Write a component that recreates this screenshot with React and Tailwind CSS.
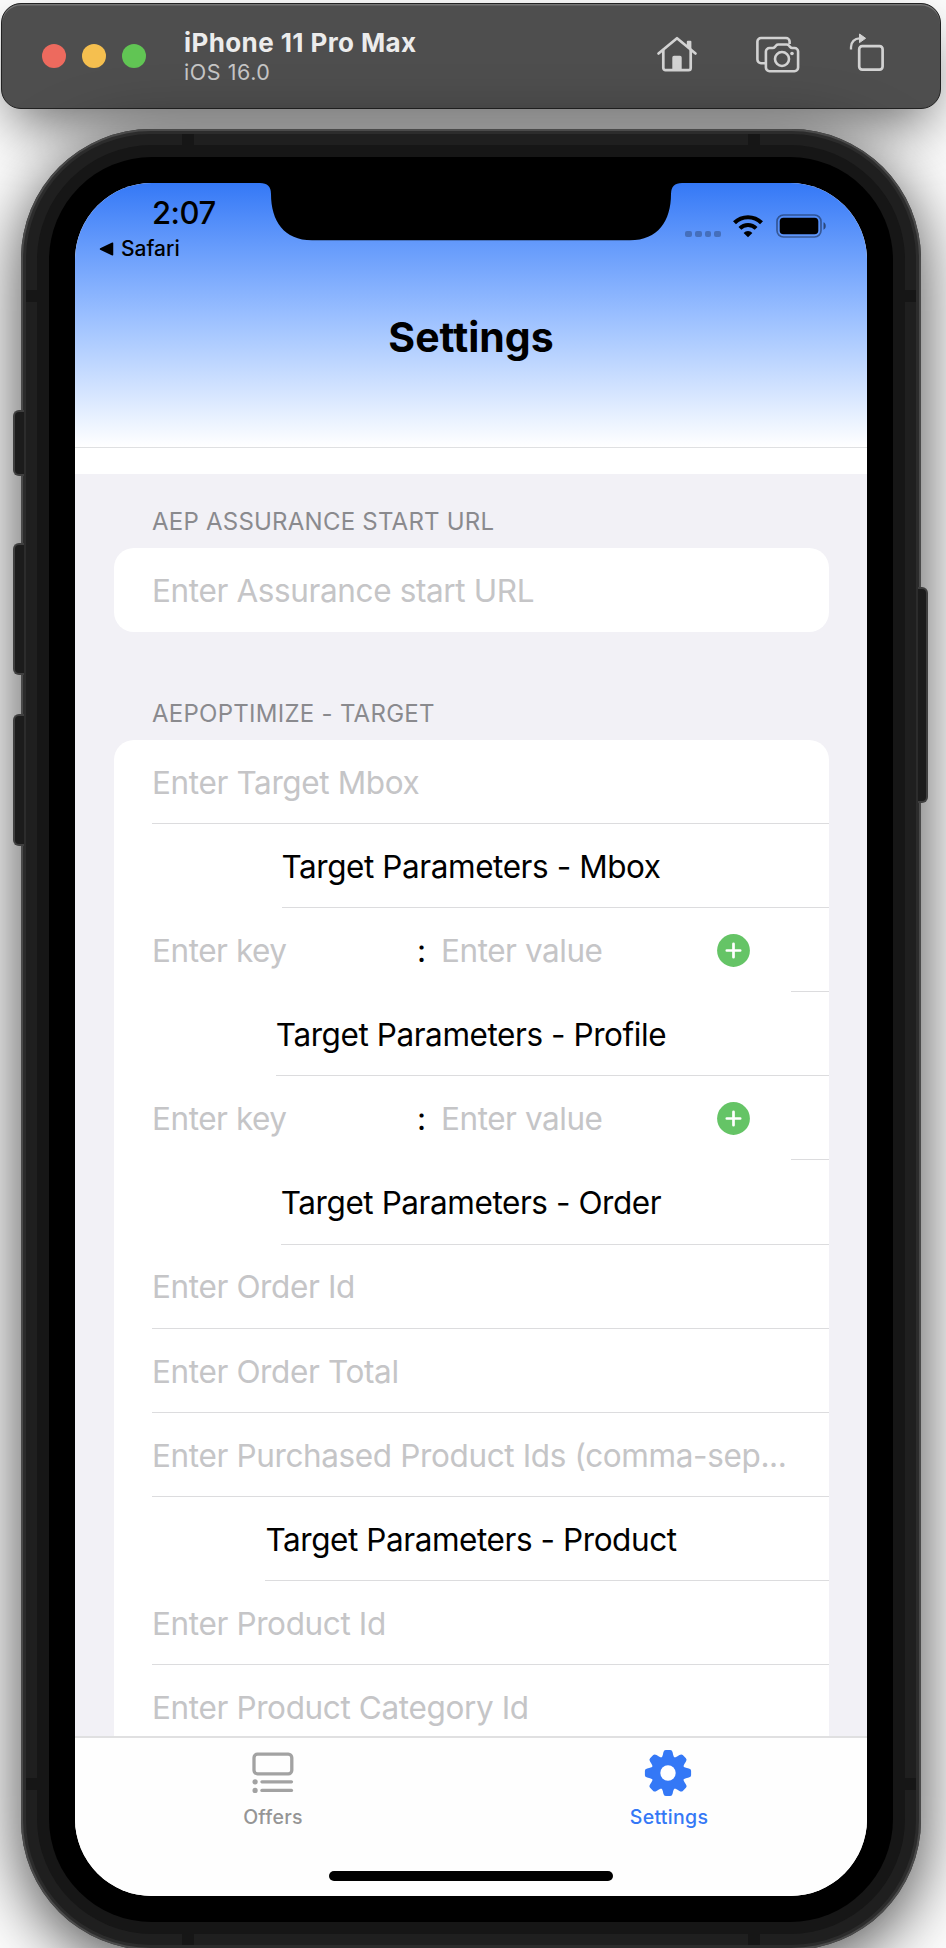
const fields = [
  { kind: 'field', text: 'Enter Target Mbox' },
  { kind: 'title', text: 'Target Parameters - Mbox', inset: 'ml-[168px]' },
  { kind: 'pair' },
  { kind: 'title', text: 'Target Parameters - Profile', inset: 'ml-[162px]' },
  { kind: 'pair' },
  { kind: 'title', text: 'Target Parameters - Order', inset: 'ml-[167px]' },
  { kind: 'field', text: 'Enter Order Id' },
  { kind: 'field', text: 'Enter Order Total' },
  { kind: 'field', text: 'Enter Purchased Product Ids (comma-sep...' },
  { kind: 'title', text: 'Target Parameters - Product', inset: 'ml-[151px]' },
  { kind: 'field', text: 'Enter Product Id' },
  { kind: 'field', text: 'Enter Product Category Id' },
];

function HomeIcon() {
  return (
    <svg className="h-[38px] w-[42px]" viewBox="0 0 42 38" fill="none" stroke="#d2d2d2" strokeWidth="2.7" strokeLinecap="round" strokeLinejoin="round">
      <path d="M2.5 18.5 21 3.200 39.500 18.500" />
      <path d="M7.300 15v18a2.200 2.200 0 0 0 2.200 2.200h23a2.200 2.200 0 0 0 2.200-2.200V15" />
      <path d="M31.800 11.500V6.700h2.600v7.100" strokeWidth="2" fill="#d2d2d2" />
      <path d="M17 35V22.500q0-1 1-1h6q1 0 1 1V35z" fill="#d2d2d2" strokeWidth="1.400" />
    </svg>
  );
}

function CameraIcon() {
  return (
    <svg className="h-[38px] w-[46px]" viewBox="0 0 46 38" fill="none" stroke="#d2d2d2" strokeWidth="2.6" strokeLinecap="round" strokeLinejoin="round">
      <path d="M10 28.200H6a3.600 3.600 0 0 1-3.600-3.600V6.600A3.600 3.600 0 0 1 6 3h25a3.600 3.600 0 0 1 3.600 3.600V9" strokeLinecap="butt" />
      <path d="M14.500 13h3.200c1.200 0 1.600-.4 2.300-1.200l1.100-1.300c.6-.7 1.200-1 2.200-1h8.400c1 0 1.600.3 2.200 1l1.100 1.300c.7.8 1.100 1.200 2.300 1.200h2.200a3.600 3.600 0 0 1 3.600 3.600v16a3.600 3.600 0 0 1-3.600 3.600h-25a3.600 3.600 0 0 1-3.600-3.600v-16A3.600 3.600 0 0 1 14.500 13z" />
      <circle cx="27" cy="24" r="7" />
      <circle cx="37" cy="18.500" r="1.800" fill="#d2d2d2" stroke="none" />
    </svg>
  );
}

function RotateIcon() {
  return (
    <svg className="h-[40px] w-[36px]" viewBox="0 0 36 40" fill="none" stroke="#d2d2d2" strokeWidth="2.7">
      <rect x="10.200" y="14.200" width="23.400" height="23.400" rx="3" />
      <path d="M2 17.500V15a8.500 8.500 0 0 1 8.500-8.700" strokeWidth="2.300" />
      <path d="M10.500 2v8.600L16.600 6.300z" fill="#d2d2d2" strokeWidth="1" strokeLinejoin="round" />
    </svg>
  );
}

function WifiIcon() {
  return (
    <svg className="h-[24px] w-[32px]" viewBox="0 0 32 24" fill="none" stroke="#000" strokeWidth="4.200">
      <path d="M2.500 8.800a19.200 19.200 0 0 1 27 0" />
      <path d="M7.900 14.300a11.500 11.500 0 0 1 16.200 0" strokeWidth="4" />
      <path d="M16 23.300 11.600 18.900a6.300 6.300 0 0 1 8.800 0z" fill="#000" stroke="none" />
    </svg>
  );
}

function BatteryIcon() {
  return (
    <svg className="h-[24px] w-[51px]" viewBox="0 0 51 24">
      <rect x="1" y="1" width="44" height="22" rx="6.500" fill="none" stroke="#000" strokeOpacity="0.400" strokeWidth="1.700" />
      <rect x="3.700" y="3.800" width="38.600" height="16.400" rx="3.800" fill="#000" />
      <path d="M47.500 8.300c3 1 3 6.400 0 7.400z" fill="#000" fillOpacity="0.500" />
    </svg>
  );
}

function PlusCircle() {
  return (
    <svg className="h-[33px] w-[33px]" viewBox="0 0 33 33">
      <circle cx="16.500" cy="16.500" r="16.400" fill="#65c466" />
      <path d="M16.500 9.800v13.400M9.800 16.500h13.400" stroke="#fff" strokeWidth="2.700" strokeLinecap="round" />
    </svg>
  );
}

function OffersIcon() {
  return (
    <svg className="h-[42px] w-[42px]" viewBox="0 0 42 42" fill="#a2a2a2">
      <rect x="2" y="2.200" width="37.800" height="19.600" rx="3.500" fill="none" stroke="#a2a2a2" strokeWidth="3.300" />
      <circle cx="3.100" cy="29.800" r="2.600" />
      <circle cx="3.100" cy="38.400" r="2.600" />
      <rect x="8.300" y="28.200" width="32.800" height="3.200" rx="1.600" />
      <rect x="8.300" y="36.800" width="32.800" height="3.200" rx="1.600" />
    </svg>
  );
}

const teeth = [0, 45, 90, 135, 180, 225, 270, 315];

function GearIcon() {
  return (
    <svg className="h-[48px] w-[48px]" viewBox="-24 -24 48 48">
      <g fill="#3478f6">
        {teeth.map((a) => (
          <path key={a} transform={`rotate(${a})`} d="M-7.500-14.500Q-5.700-15.500-5.200-18L-4.600-20.800Q-4.100-23.100-2.200-23.100H2.200Q4.100-23.100 4.600-20.800L5.200-18Q5.700-15.500 7.500-14.500L5-8H-5z" />
        ))}
        <circle r="16.300" />
      </g>
      <circle r="7.700" fill="#fff" />
    </svg>
  );
}

function Row({ row }) {
  const placeholder = 'text-[#c5c5c7]';
  if (row.kind === 'title') {
    return (
      <div className="flex h-[84.100px] flex-col">
        <div className="flex flex-1 items-center justify-center pt-0.5 tracking-[-0.430px] text-black">{row.text}</div>
        <div className={`h-px shrink-0 bg-[#dcdcde] ${row.inset}`} />
      </div>
    );
  }
  if (row.kind === 'pair') {
    return (
      <div className="flex h-[84.100px] flex-col">
        <div className="flex flex-1 items-center pl-[38.500px] pt-0.5 tracking-[-0.450px]">
          <span className={`w-[265px] ${placeholder}`}>Enter key</span>
          <span className="w-[24px] text-black">:</span>
          <span className={`w-[276px] ${placeholder}`}>Enter value</span>
          <PlusCircle />
        </div>
        <div className="ml-[677px] h-px shrink-0 bg-[#dcdcde]" />
      </div>
    );
  }
  return (
    <div className="flex h-[84.100px] flex-col">
      <div className={`flex flex-1 items-center whitespace-nowrap pl-[38.500px] pt-0.5 ${placeholder}`}>{row.text}</div>
      <div className="ml-[38.500px] h-px shrink-0 bg-[#dcdcde]" />
    </div>
  );
}

function SideButton({ className }) {
  return <div className={`absolute border-2 border-[#3f3f3f] bg-[#1c1c1c] ${className}`} />;
}

export default function App() {
  return (
    <div className="relative h-[1948px] w-[946px] overflow-hidden bg-[#fdfdfd] pl-px pt-[3px] font-['Inter','Liberation_Sans',sans-serif]">
      <header className="relative flex h-[106px] w-[940px] items-center rounded-[20px] border border-[#222] bg-[#4e4e4e] pl-[40px] pr-[55px] shadow-[0_24px_56px_-10px_rgba(0,0,0,0.58),inset_0_1.500px_0_#747474]">
        <div className="flex gap-4">
          <span className="h-6 w-6 rounded-full bg-[#ed6a5e]" />
          <span className="h-6 w-6 rounded-full bg-[#f5bf4f]" />
          <span className="h-6 w-6 rounded-full bg-[#61c554]" />
        </div>
        <div className="ml-[38px] flex-1 pt-0.5">
          <div className="text-[26px] font-bold leading-[30px] tracking-[0.400px] text-[#ececec]">iPhone 11 Pro Max</div>
          <div className="text-[21.500px] leading-[29px] tracking-[0.550px] text-[#c6c6c6]">iOS 16.0</div>
        </div>
        <div className="flex items-center pb-[5px]">
          <HomeIcon />
          <div className="ml-[57px]"><CameraIcon /></div>
          <div className="ml-[48px] pb-1"><RotateIcon /></div>
        </div>
      </header>

      <main className="relative ml-[20px] mt-[20px] h-[1821px] w-[900px]">
        <div className="relative h-full rounded-[130px] bg-[#2c2c2c] p-[5px] shadow-[0_14px_66px_rgba(0,0,0,0.72),inset_0_0_0_2px_#4a4a4a]">
          <div className="relative h-full overflow-hidden rounded-[125px] bg-[#1f1f1f] p-[11px]">
            <div className="absolute left-[156px] top-0 h-full w-3 bg-[#161616]" />
            <div className="absolute right-[156px] top-0 h-full w-3 bg-[#161616]" />
            <div className="absolute left-0 top-[156px] h-3 w-full bg-[#161616]" />
            <div className="absolute bottom-[155px] left-0 h-3 w-full bg-[#161616]" />
            <div className="relative h-full rounded-[115px] bg-[#161616] p-[12px]">
              <div className="h-full rounded-[103px] bg-black p-[26px]">
                <div className="relative flex h-full flex-col overflow-hidden rounded-[77px] bg-white">
                  <div className="relative h-[265px] shrink-0 border-b border-[#dfe0e2] bg-gradient-to-b from-[#3478f6] to-white">
                    <svg className="absolute left-[185px] top-0 h-[58px] w-[422px]" viewBox="0 0 422 58">
                      <path d="M0 0H422Q411 0 411 11C411 38 398 57.300 370 57.300H52C24 57.300 11 38 11 11Q11 0 0 0z" fill="#000" />
                    </svg>
                    <div className="flex justify-between">
                      <div className="pl-[24px] pt-[12px]">
                        <div className="pl-[53px] text-[31px] font-medium leading-[36px] tracking-[-0.500px]">2:07</div>
                        <div className="flex items-center gap-[7px] pt-[5px] text-[21px] font-medium leading-[26px]">
                          <svg className="h-[14px] w-[15px]" viewBox="0 0 15 14"><path d="M1.500 7 13.500 1.200v11.600z" fill="#000" stroke="#000" strokeWidth="1.500" strokeLinejoin="round" /></svg>
                          <span>Safari</span>
                        </div>
                      </div>
                      <div className="flex h-[24px] items-start pr-[40px] pt-[31px]">
                        <div className="mr-[11px] mt-[16.500px] flex gap-[3px]">
                          <span className="h-[6.500px] w-[6.700px] rounded-[2px] bg-black/25" />
                          <span className="h-[6.500px] w-[6.700px] rounded-[2px] bg-black/25" />
                          <span className="h-[6.500px] w-[6.700px] rounded-[2px] bg-black/25" />
                          <span className="h-[6.500px] w-[6.700px] rounded-[2px] bg-black/25" />
                        </div>
                        <WifiIcon />
                        <div className="ml-[12px]"><BatteryIcon /></div>
                      </div>
                    </div>
                    <h1 className="mt-[50.500px] text-center text-[41px] font-bold leading-[48px]">Settings</h1>
                  </div>
                  <div className="h-[26px] shrink-0" />
                  <section className="min-h-0 flex-1 overflow-hidden bg-[#f2f1f6] px-[38.500px] text-[31.500px] tracking-[-0.370px]">
                    <h2 className="pl-[38.500px] pt-[34px] text-[24px] leading-[28px] tracking-[0.230px] text-[#8a8a8e]">AEP ASSURANCE START URL</h2>
                    <div className="mt-[12px] flex h-[83.500px] items-center rounded-[20px] bg-white pl-[38.500px] pt-0.5 text-[#c5c5c7]">Enter Assurance start URL</div>
                    <h2 className="pl-[38.500px] pt-[68.500px] text-[24px] leading-[28px] tracking-[0.270px] text-[#8a8a8e]">AEPOPTIMIZE - TARGET</h2>
                    <div className="mt-[12px] rounded-t-[20px] bg-white">
                      {fields.map((row, i) => <Row key={i} row={row} />)}
                    </div>
                  </section>
                  <nav className="relative h-[160px] shrink-0 border-t-2 border-[#e0e0e1] bg-[#fefefe]">
                    <div className="grid grid-cols-2 text-[19.500px] font-medium leading-[24px] tracking-[0.300px]">
                      <div className="flex flex-col items-center pt-[14px] text-[#959595]">
                        <div className="flex h-[48px] items-start pr-px"><OffersIcon /></div>
                        <span className="mt-[5px]">Offers</span>
                      </div>
                      <div className="flex flex-col items-center pt-[11px] text-[#3478f6]">
                        <div className="flex h-[51px] items-start pr-0.5"><GearIcon /></div>
                        <span className="mt-[5px]">Settings</span>
                      </div>
                    </div>
                    <div className="mx-auto mt-[42px] h-[10px] w-[284px] rounded-full bg-black" />
                  </nav>
                </div>
              </div>
            </div>
          </div>
        </div>
        <SideButton className="left-[-8px] top-[281px] h-[66px] w-[11px] rounded-l-[6px] border-r-0" />
        <SideButton className="left-[-8px] top-[414px] h-[132px] w-[11px] rounded-l-[6px] border-r-0" />
        <SideButton className="left-[-8px] top-[585px] h-[132px] w-[11px] rounded-l-[6px] border-r-0" />
        <SideButton className="right-[-7px] top-[458px] h-[216px] w-[10px] rounded-r-[6px] border-l-0" />
      </main>
    </div>
  );
}
